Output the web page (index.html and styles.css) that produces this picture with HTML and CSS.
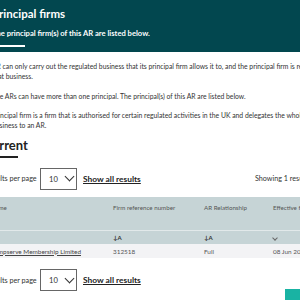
FILE: index.html
```html
<!DOCTYPE html>
<html lang="en">
<head>
    <meta charset="UTF-8">
    <meta name="viewport" content="width=device-width, initial-scale=1.0">
    <title>Principal firms</title>
    <link rel="stylesheet" href="styles.css">
</head>
<body>

    <div class="banner">
        <div class="inner">
            <h1>Principal firms</h1>
            <p class="lead">The principal firm(s) of this AR are listed below.</p>
            <div class="bar"></div>
        </div>
    </div>

    <div class="inner content">
        <p>AR can only carry out the regulated business that its principal firm allows it to, and the principal firm is responsible for<br>that business.</p>
        <p>The ARs can have more than one principal. The principal(s) of this AR are listed below.</p>
        <p>Principal firm is a firm that is authorised for certain regulated activities in the UK and delegates the whole or part of its<br>business to an AR.</p>

        <h2>Current</h2>
        <div class="bar dark"></div>

        <div class="results-row">
            <span class="per-page">Results per page</span>
            <div class="select">10 <span class="chev"></span></div>
            <a href="#" class="show-all">Show all results</a>
            <span class="showing">Showing 1 results</span>
        </div>

        <table class="firms">
            <thead>
                <tr class="head">
                    <th class="c1">Firm name</th>
                    <th class="c2">Firm reference number</th>
                    <th class="c3">AR Relationship</th>
                    <th class="c4">Effective from</th>
                </tr>
                <tr class="sort">
                    <th></th>
                    <th><span class="az">↓A</span></th>
                    <th><span class="az">↓A</span></th>
                    <th><span class="chev small"></span></th>
                </tr>
            </thead>
            <tbody>
                <tr>
                    <td class="name"><a href="#">Compserve Membership Limited</a></td>
                    <td>312518</td>
                    <td>Full</td>
                    <td>08 Jun 2005</td>
                </tr>
            </tbody>
        </table>

        <div class="results-row bottom">
            <span class="per-page">Results per page</span>
            <div class="select">10 <span class="chev"></span></div>
            <a href="#" class="show-all">Show all results</a>
        </div>
    </div>

    <a href="#" class="to-top"></a>

</body>
</html>
```

FILE: styles.css
```css
html, body {
    margin: 0;
    overflow: hidden;
}
body {
    font-family: Lato, "Open Sans", sans-serif;
    color: #333;
    background-color: #fff;
    width: 300px;
    height: 300px;
    position: relative;
}
.inner {
    margin-left: -8px;
    width: 360px;
}
.banner {
    background-color: #02474f;
    height: 52px;
    color: #fff;
}
.banner .inner {
    padding-top: 6px;
}
h1 {
    font-size: 11.5px;
    line-height: 16px;
    margin: 0;
    font-weight: 700;
}
.lead {
    font-size: 7.6px;
    font-weight: 700;
    line-height: 12px;
    margin: 5px 0 0;
}
.bar {
    width: 33px;
    height: 2px;
    background-color: #fff;
    margin-top: 6px;
}
.bar.dark {
    background-color: #222;
    width: 34px;
    margin-top: 3px;
    margin-left: -8px;
}
.content {
    padding-top: 9px;
}
.content p {
    font-size: 6.8px;
    line-height: 10px;
    margin: 0 0 9.5px;
    white-space: nowrap;
}
h2 {
    font-size: 13px;
    line-height: 16px;
    font-weight: 700;
    margin: -3px 0 0 -8.5px;
    color: #222;
}
.results-row {
    display: flex;
    align-items: center;
    margin-top: 10px;
    margin-left: -7px;
    font-size: 7.2px;
}
.per-page {
    width: 55px;
}
.select {
    width: 37px;
    height: 22px;
    box-sizing: border-box;
    border: 1px solid #666;
    display: flex;
    align-items: center;
    padding-left: 8px;
    gap: 8px;
    font-size: 7.6px;
}
.chev {
    width: 6px;
    height: 6px;
    border-right: 1px solid #333;
    border-bottom: 1px solid #333;
    transform: rotate(45deg);
    margin-top: -4px;
}
.chev.small {
    display: inline-block;
    width: 3px;
    height: 3px;
    border-color: #666;
    margin-top: 0;
}
.show-all {
    margin-left: 6px;
    color: #222;
    font-weight: 700;
    font-size: 8.4px;
    text-decoration: underline;
}
.showing {
    margin-left: auto;
    width: 97px;
    font-size: 7.2px;
}
.firms {
    width: 360px;
    border-collapse: collapse;
    margin-top: 7px;
    font-size: 6.4px;
}
.firms th {
    text-align: left;
    font-weight: 400;
    color: #555;
    background-color: #c6d4d6;
    padding: 0;
    font-size: 6.2px;
}
.head th {
    height: 34px;
    vertical-align: top;
    padding-top: 7px;
    box-sizing: border-box;
}
.sort th {
    height: 13px;
    border-top: 1px solid #e2e9ea;
    vertical-align: middle;
}
.az {
    font-size: 6px;
    font-weight: 700;
    color: #333;
}
.c1 { width: 121px; }
.c2 { width: 91px; }
.c3 { width: 69px; }
.firms td {
    background-color: #f3f3f5;
    height: 14px;
    padding: 0;
    color: #555;
}
.firms .head .c1 {
    text-indent: -14px;
}
.firms td.name {
    text-indent: -2px;
}
.firms td a {
    color: #444;
    text-decoration: underline;
}
.results-row.bottom {
    margin-top: 11px;
}
.to-top {
    position: absolute;
    left: 285px;
    top: 289px;
    width: 20px;
    height: 20px;
    background-color: #19b3a3;
}
```
